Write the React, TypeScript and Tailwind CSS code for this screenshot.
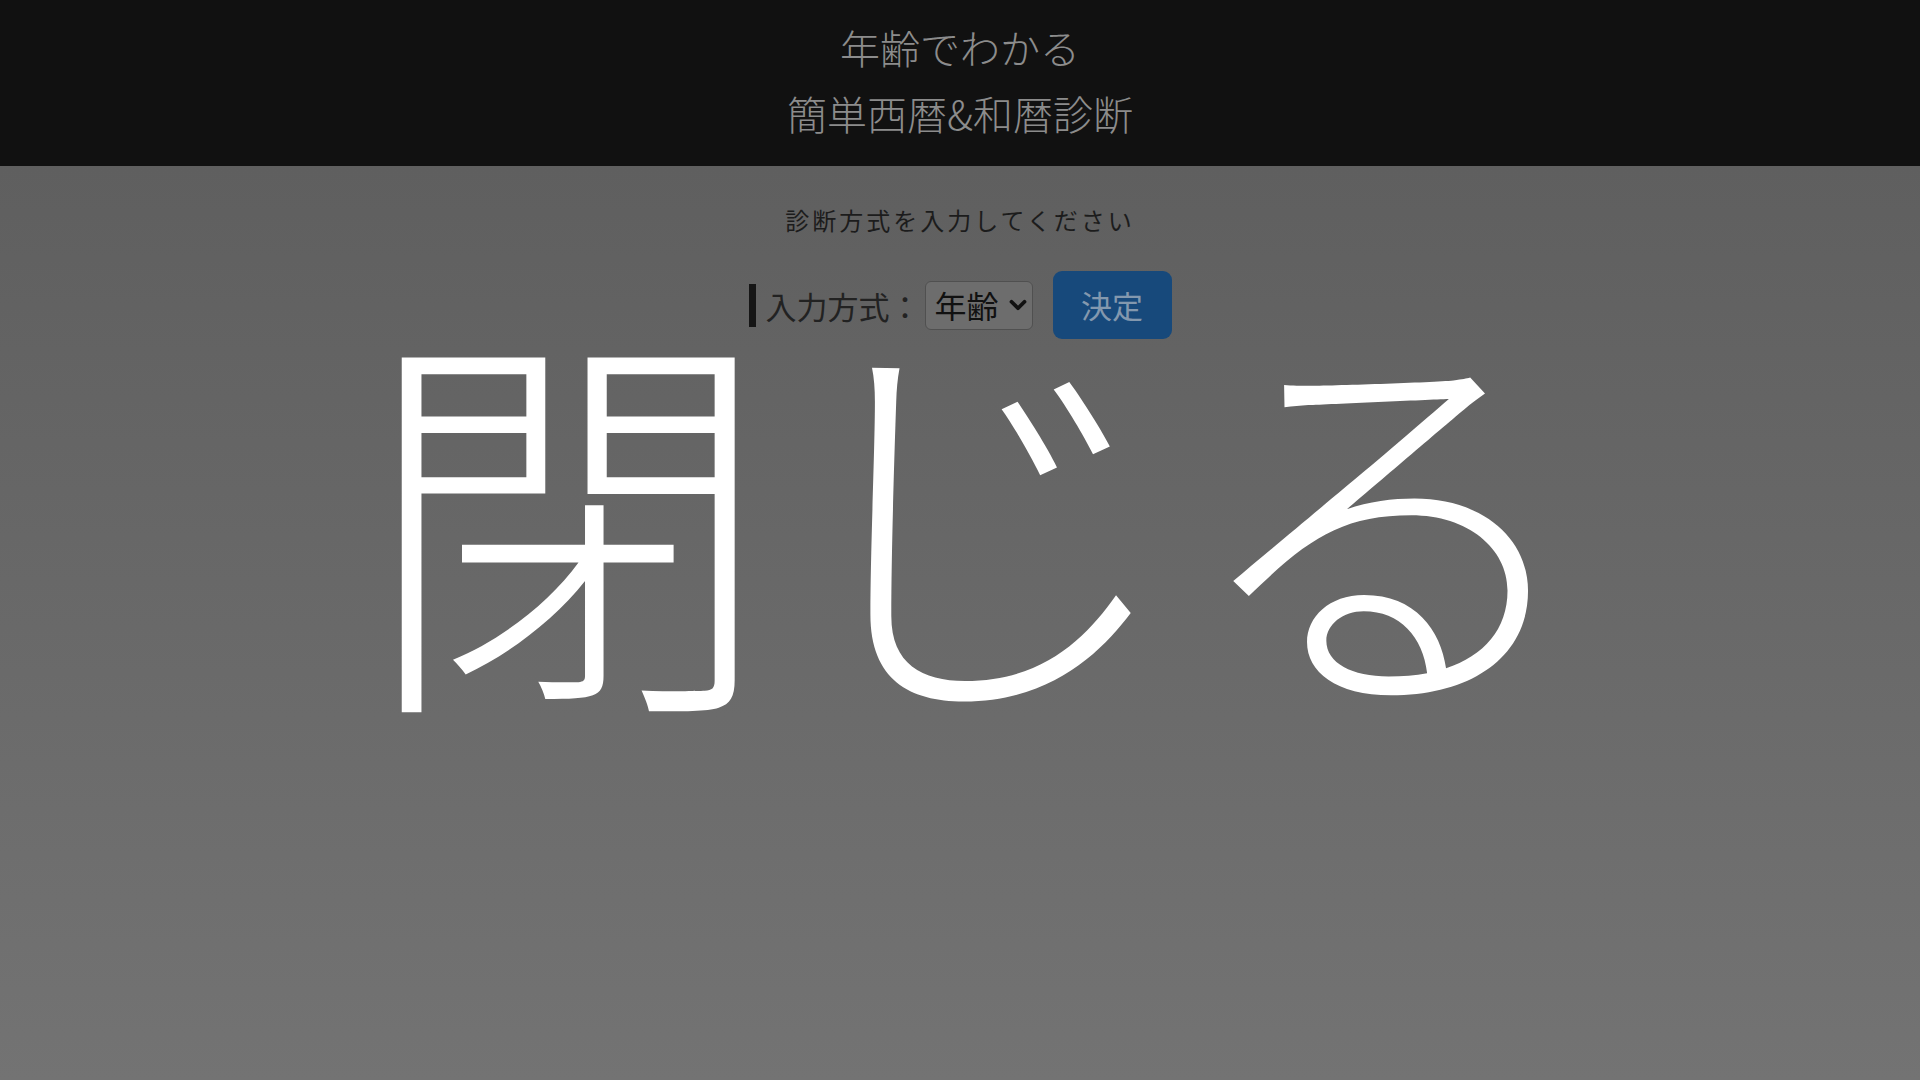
import { ChevronDown } from "lucide-react";

const FONT = "font-['Noto_Sans_CJK_JP','Noto_Sans',sans-serif]";

export default function App() {
  return (
    <div className={`relative flex min-h-screen flex-col bg-[#111111] ${FONT}`}>
      <header className="bg-[#111111] pb-[20px] pt-[14px] text-center text-[40px] leading-[66px] text-[#8c8c8c]">
        <h1 className="font-light">
          年齢でわかる
          <br />
          簡単西暦&amp;和暦診断
        </h1>
      </header>

      <main className="flex min-h-[914px] flex-1 flex-col items-center bg-gradient-to-b from-[#5f5f5f] to-[#737373] pt-[36px]">
        <p className="text-[24px] leading-[36px] tracking-[3px] text-[#1c1c1c]">
          診断方式を入力してください
        </p>

        <form className="mt-[33px] flex items-center" onSubmit={(e) => e.preventDefault()}>
          <label
            htmlFor="mode"
            className="border-l-[7px] border-[#161616] pl-[10px] text-[31px] leading-[43px] text-[#222222]"
          >
            入力方式：
          </label>
          <div className="relative ml-[4px]">
            <select
              id="mode"
              defaultValue="age"
              className="h-[49px] w-[108px] appearance-none rounded-[6px] border border-[#505050] bg-[#6d6d6d] pl-[9px] text-[32px] leading-none text-[#111111] outline-none"
            >
              <option value="age">年齢</option>
              <option value="seireki">西暦</option>
              <option value="wareki">和暦</option>
            </select>
            <ChevronDown
              size={26}
              strokeWidth={3.5}
              className="pointer-events-none absolute right-[2px] top-[11px] text-[#111111]"
            />
          </div>
          <button
            type="submit"
            className="ml-[20px] h-[68px] w-[119px] rounded-[9px] bg-[#17497b] text-[31px] text-[#8398ae]"
          >
            決定
          </button>
        </form>
      </main>

      <div className="pointer-events-none absolute inset-x-0 top-[297px] pl-[34px] text-center">
        <span className="text-[410px] font-light leading-none text-white">閉じる</span>
      </div>
    </div>
  );
}
